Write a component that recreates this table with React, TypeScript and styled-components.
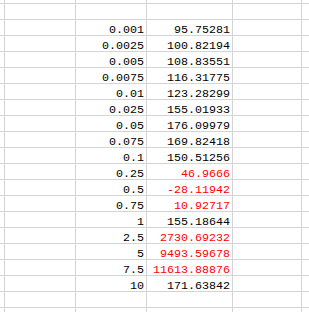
import styled, { createGlobalStyle } from 'styled-components';

const GlobalStyle = createGlobalStyle`
  html, body {
    margin: 0;
    padding: 0;
    background: #ffffff;
  }
  body {
    width: 309px;
    height: 312px;
    overflow: hidden;
  }
`;

type Entry = { x: string; y: string; red?: boolean };

const data: Entry[] = [
  { x: '0.001', y: '95.75281' },
  { x: '0.0025', y: '100.82194' },
  { x: '0.005', y: '108.83551' },
  { x: '0.0075', y: '116.31775' },
  { x: '0.01', y: '123.28299' },
  { x: '0.025', y: '155.01933' },
  { x: '0.05', y: '176.09979' },
  { x: '0.075', y: '169.82418' },
  { x: '0.1', y: '150.51256' },
  { x: '0.25', y: '46.9666', red: true },
  { x: '0.5', y: '-28.11942', red: true },
  { x: '0.75', y: '10.92717', red: true },
  { x: '1', y: '155.18644' },
  { x: '2.5', y: '2730.69232', red: true },
  { x: '5', y: '9493.59678', red: true },
  { x: '7.5', y: '11613.88876', red: true },
  { x: '10', y: '171.63842' },
];

const App = () => {
  const renderRow = (key: string, height: number, x = '', y = '', red = false) => (
    <Row key={key} $height={height}>
      <Cell />
      <Cell />
      <Cell>{x}</Cell>
      <Cell $red={red}>{y}</Cell>
      <Cell />
      <Cell $last />
    </Row>
  );

  return (
    <>
      <GlobalStyle />
      <Sheet>
        {renderRow('top', 4)}
        {renderRow('blank-1', 16)}
        {data.map((d, i) => renderRow(`r${i}`, 16, d.x, d.y, d.red))}
        {renderRow('blank-2', 16)}
        {renderRow('bottom', 16)}
      </Sheet>
    </>
  );
};

export default App;

const Sheet = styled.div`
  display: flex;
  flex-direction: column;
  width: 309px;
  font-family: 'Liberation Mono', 'DejaVu Sans Mono', monospace;
  font-size: 11.67px;
  color: #000000;
`;

const Row = styled.div<{ $height: number }>`
  display: grid;
  grid-template-columns: 5px 71px 71px 86px 69px 1fr;
  height: ${(p) => p.$height}px;
  flex-shrink: 0;
`;

const Cell = styled.div<{ $red?: boolean; $last?: boolean }>`
  box-sizing: border-box;
  border-bottom: 1px solid #d4d4d4;
  border-right: ${(p) => (p.$last ? 'none' : '1px solid #d4d4d4')};
  color: ${(p) => (p.$red ? '#ff0000' : '#000000')};
  display: flex;
  align-items: flex-end;
  justify-content: flex-end;
  padding-right: 2px;
  line-height: 10px;
  white-space: nowrap;
  overflow: visible;
`;
